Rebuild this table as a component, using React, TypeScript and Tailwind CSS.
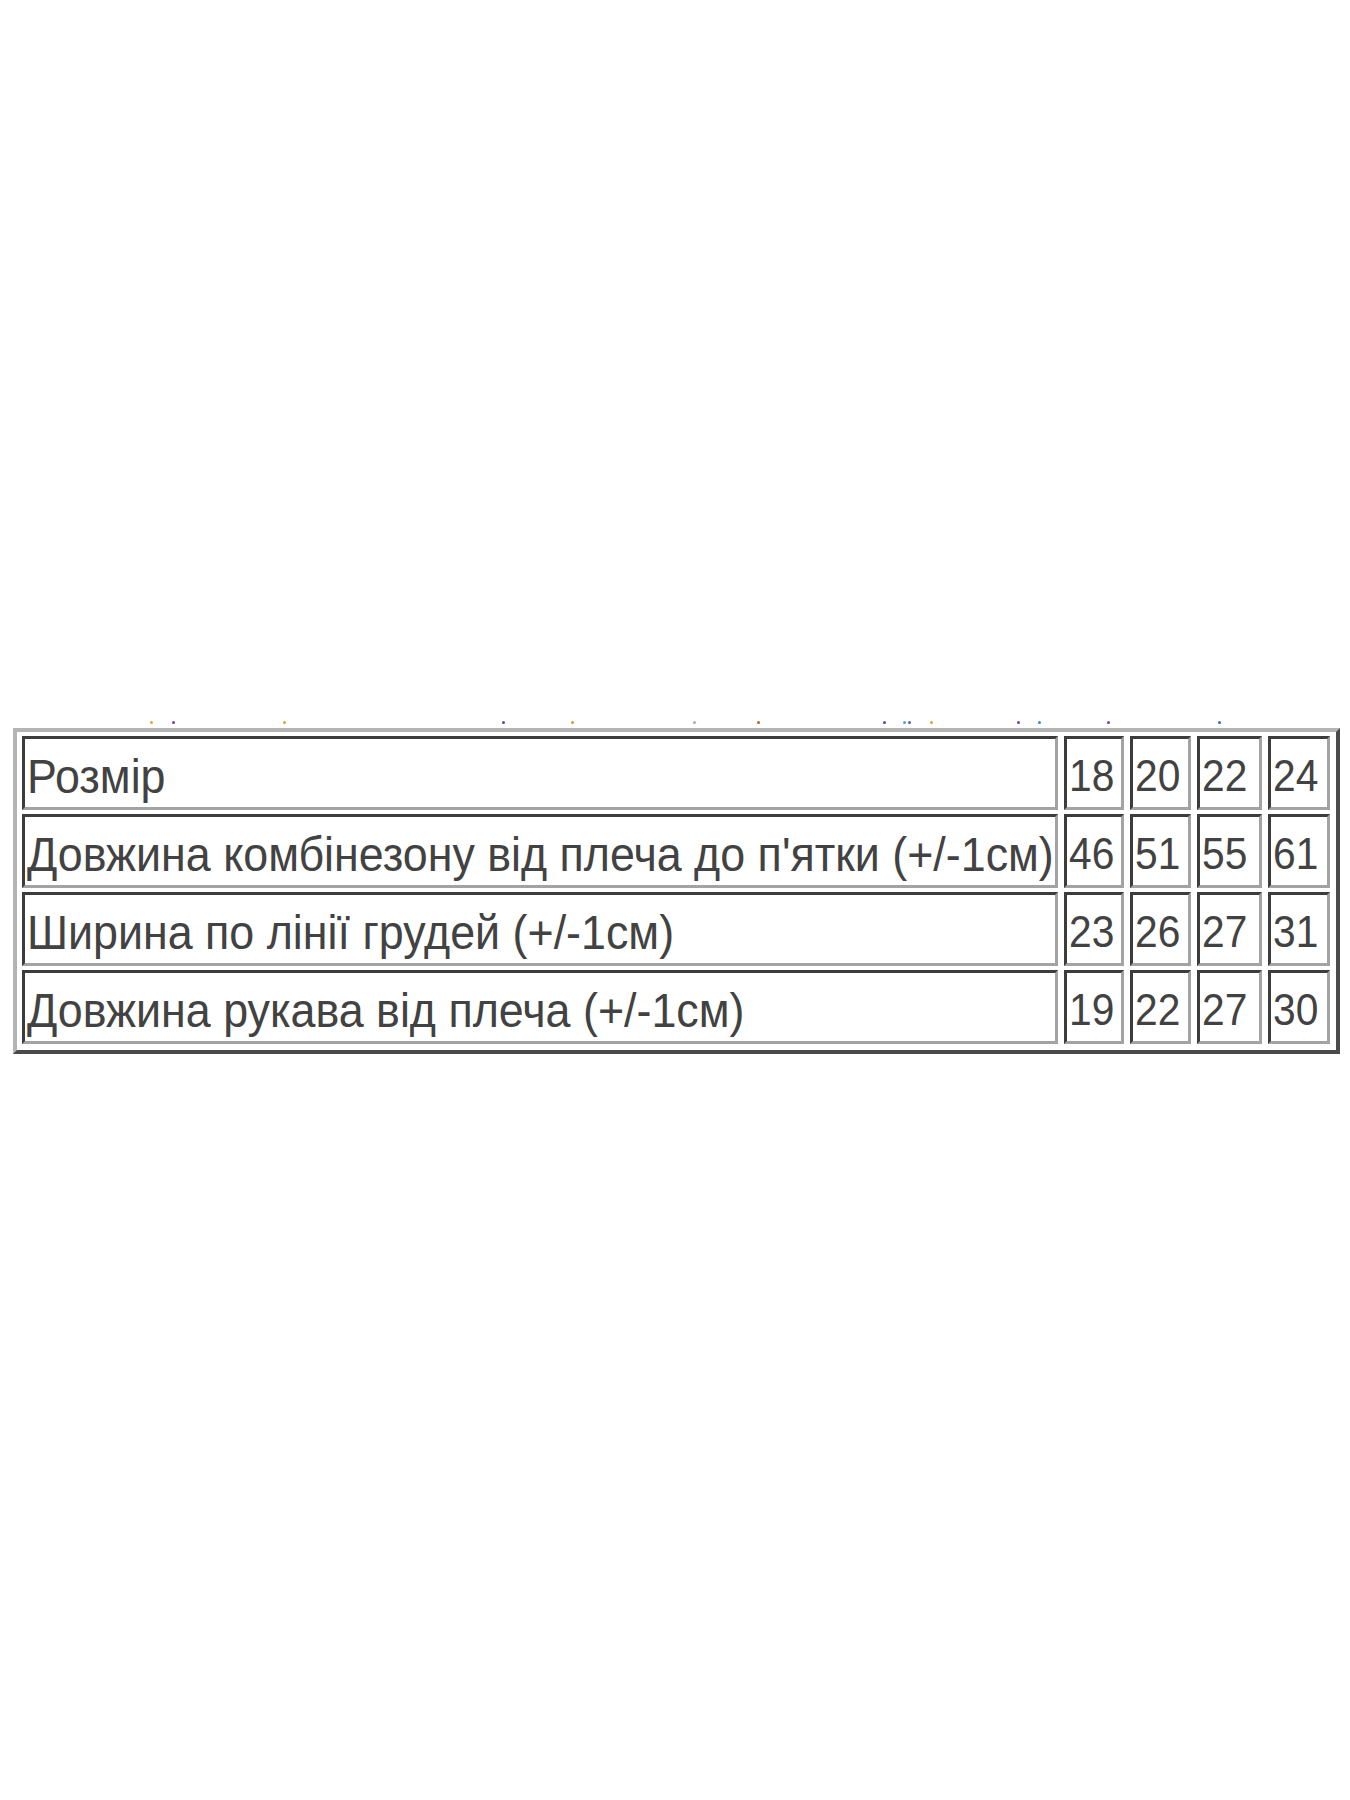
import React from "react";

const rows: { label: string; values: string[] }[] = [
  { label: "Розмір", values: ["18", "20", "22", "24"] },
  { label: "Довжина комбінезону від плеча до п'ятки (+/-1см)", values: ["46", "51", "55", "61"] },
  { label: "Ширина по лінії грудей (+/-1см)", values: ["23", "26", "27", "31"] },
  { label: "Довжина рукава від плеча (+/-1см)", values: ["19", "22", "27", "30"] },
];

const dots: { x: number; c: string }[] = [
  { x: 150, c: "#d9a441" },
  { x: 172, c: "#7a3fa0" },
  { x: 283, c: "#d9a441" },
  { x: 502, c: "#5a4aa0" },
  { x: 571, c: "#c8a040" },
  { x: 693, c: "#b7a3c9" },
  { x: 757, c: "#b06a2a" },
  { x: 883, c: "#5a4aa0" },
  { x: 903, c: "#5aa0d0" },
  { x: 908, c: "#4a6ab0" },
  { x: 930, c: "#d9a441" },
  { x: 1017, c: "#7a3fa0" },
  { x: 1038, c: "#3a8ac0" },
  { x: 1107, c: "#7a3fa0" },
  { x: 1218, c: "#3a6ab0" },
];

function Cell({ children, num }: { children: React.ReactNode; num?: boolean }) {
  return (
    <div className="h-[74px] border-[3px] border-t-[#3c3c3c] border-l-[#3c3c3c] border-b-[#a3a3a3] border-r-[#a3a3a3] flex items-center overflow-hidden whitespace-nowrap pl-[2px]">
      <span
        className={
          "inline-block origin-left translate-y-[3px] scale-y-[1.06] leading-none text-[#424242] " +
          (num ? "text-[42px] scale-x-[0.97]" : "text-[44.8px]")
        }
      >
        {children}
      </span>
    </div>
  );
}

export default function App() {
  return (
    <div
      className="min-h-[1800px] w-[1350px] bg-white"
      style={{ fontFamily: '"Liberation Sans", Arial, sans-serif' }}
    >
      <div className="relative h-[728px]">
        {dots.map((d, i) => (
          <span
            key={i}
            className="absolute top-[721px] h-[3px] w-[3px] rounded-full"
            style={{ left: d.x, backgroundColor: d.c }}
          />
        ))}
      </div>
      <div className="ml-[13px] w-[1327px] border-[4px] border-t-[#b4b4b4] border-l-[#b4b4b4] border-b-[#4a4a4a] border-r-[#4a4a4a] pt-[4px] pl-[5px] pr-[6px] pb-[6px]">
        <div className="grid grid-cols-[1036px_60px_61px_65px_62px] gap-x-[6px] gap-y-[4px]">
          {rows.map((r) => (
            <React.Fragment key={r.label}>
              <Cell>{r.label}</Cell>
              {r.values.map((v, i) => (
                <Cell key={i} num>
                  {v}
                </Cell>
              ))}
            </React.Fragment>
          ))}
        </div>
      </div>
    </div>
  );
}
